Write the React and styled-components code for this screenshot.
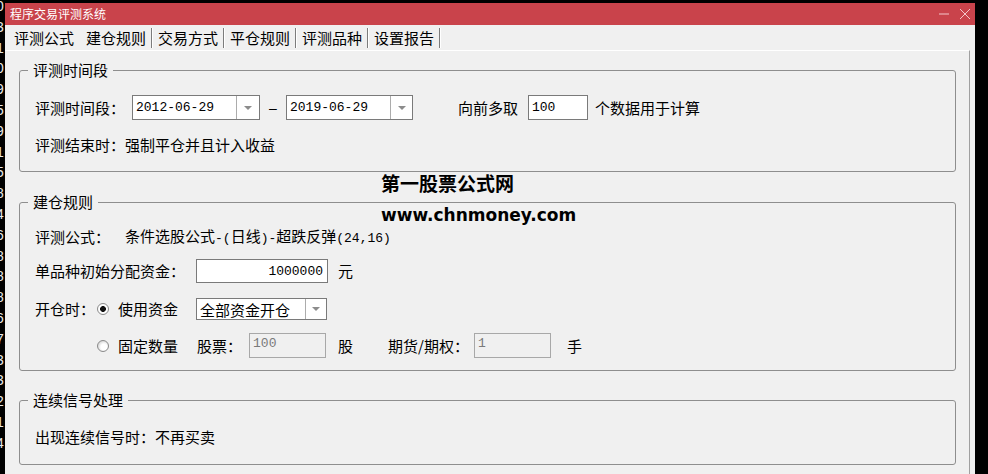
import React from 'react'
import styled, { createGlobalStyle } from 'styled-components'

const GlobalStyle = createGlobalStyle`
  html, body {
    margin: 0;
    padding: 0;
    background: #000;
  }
  body {
    font-family: "Noto Sans CJK SC", "Noto Sans", sans-serif;
    color: #000;
  }
`

const digits = ['0', '3', '1', '0', '9', '5', '9', '1', '5', '8', '4', '6', '8', '8', '8', '6', '7', '3', '3', '2', '1', '4']

export default function App() {
  return (
    <>
      <GlobalStyle />
      <Screen>
        <DigitStrip>
          <Digits>
            {digits.map((d, i) => <Digit key={i}>{d}</Digit>)}
          </Digits>
        </DigitStrip>
        <Window>
          <TitleBar>
            <TitleText>程序交易评测系统</TitleText>
            <WinButtons>
              <svg width="12" height="12" viewBox="0 0 12 12">
                <line x1="1" y1="6" x2="11" y2="6" stroke="#f3c7ca" strokeWidth="1" />
              </svg>
              <svg width="12" height="12" viewBox="0 0 12 12">
                <line x1="1" y1="1" x2="11" y2="11" stroke="#f3c7ca" strokeWidth="1" />
                <line x1="11" y1="1" x2="1" y2="11" stroke="#f3c7ca" strokeWidth="1" />
              </svg>
            </WinButtons>
          </TitleBar>

          <TabBar>
            <Tab>评测公式</Tab>
            <Tab sep>建仓规则</Tab>
            <Tab sep>交易方式</Tab>
            <Tab sep>平仓规则</Tab>
            <Tab sep>评测品种</Tab>
            <Tab sep>设置报告</Tab>
          </TabBar>

          <Panel>
            <Group>
              <Legend>评测时间段</Legend>
              <GroupBody pb={16}>
                <Row h={25} mt={17}>
                  <Label w={97}>评测时间段：</Label>
                  <Combo w={128}>
                    <ComboText mono>2012-06-29</ComboText>
                    <ComboButton w={22}><Arrow /></ComboButton>
                  </Combo>
                  <Dash>–</Dash>
                  <Combo w={127}>
                    <ComboText mono>2019-06-29</ComboText>
                    <ComboButton w={21}><Arrow /></ComboButton>
                  </Combo>
                  <Label ml={45}>向前多取</Label>
                  <TextBox w={60} ml={10}>100</TextBox>
                  <Label ml={7}>个数据用于计算</Label>
                </Row>
                <Row h={20} mt={15}>
                  <Label>评测结束时：强制平仓并且计入收益</Label>
                </Row>
              </GroupBody>
            </Group>

            <Group mt={22}>
              <Legend>建仓规则</Legend>
              <GroupBody pb={12}>
                <Row h={20} mt={17}>
                  <Label w={90}>评测公式：</Label>
                  <Label>
                    条件选股公式<Mono>-(</Mono>日线<Mono>)-</Mono>超跌反弹<Mono>(24,16)</Mono>
                  </Label>
                </Row>
                <Row h={24} mt={12}>
                  <Label w={161}>单品种初始分配资金：</Label>
                  <TextBox w={132} right>1000000</TextBox>
                  <Label ml={10}>元</Label>
                </Row>
                <Row h={22} mt={15}>
                  <Label w={62}>开仓时：</Label>
                  <Radio checked />
                  <Label ml={9}>使用资金</Label>
                  <Combo w={131} ml={18}>
                    <ComboText>全部资金开仓</ComboText>
                    <ComboButton w={20}><Arrow /></ComboButton>
                  </Combo>
                </Row>
                <Row h={25} mt={13}>
                  <Radio ml={62} />
                  <Label ml={9}>固定数量</Label>
                  <Label ml={19}>股票：</Label>
                  <TextBox w={77} ml={7} disabled>100</TextBox>
                  <Label ml={12}>股</Label>
                  <Label ml={35}>期货/期权：</Label>
                  <TextBox w={77} ml={5} disabled>1</TextBox>
                  <Label ml={16}>手</Label>
                </Row>
              </GroupBody>
            </Group>

            <Group mt={21}>
              <Legend>连续信号处理</Legend>
              <GroupBody pb={17}>
                <Row h={20} mt={19}>
                  <Label>出现连续信号时：不再买卖</Label>
                </Row>
              </GroupBody>
            </Group>
          </Panel>

          <Watermark>
            <WatermarkLine>第一股票公式网</WatermarkLine>
            <WatermarkLine latin>www.chnmoney.com</WatermarkLine>
          </Watermark>
        </Window>
      </Screen>
    </>
  )
}

const Screen = styled.div`
  width: 988px;
  height: 474px;
  overflow: hidden;
  background: #000;
  display: flex;
  align-items: flex-start;
`

const DigitStrip = styled.div`
  width: 5px;
  height: 474px;
  overflow: hidden;
  flex-shrink: 0;
`

const Digits = styled.div`
  margin-left: -4px;
  margin-top: -4px;
  color: #e8e8e8;
  font-family: "Liberation Sans", sans-serif;
  font-size: 14px;
`

const Digit = styled.div`
  height: 20.8px;
  line-height: 20.8px;
`

const Window = styled.div`
  position: relative;
  width: 970px;
  height: 471px;
  margin-top: 3px;
  background: #f0f0f0;
  display: flex;
  flex-direction: column;
  flex-shrink: 0;
`

const TitleBar = styled.div`
  height: 22px;
  background: #c9434b;
  display: flex;
  align-items: center;
  justify-content: space-between;
  padding: 0 4px 0 5px;
`

const TitleText = styled.span`
  color: #fff;
  font-size: 12px;
  line-height: 22px;
`

const WinButtons = styled.div`
  display: flex;
  align-items: center;
  gap: 9px;
  svg {
    display: block;
  }
`

const TabBar = styled.div`
  height: 25px;
  display: flex;
  align-items: flex-end;
  padding: 0 0 2px 3px;
  box-sizing: border-box;
`

const Tab = styled.div`
  font-size: 15px;
  line-height: 20px;
  height: 20px;
  padding: 0 5px 0 6px;
  border-right: 1px solid ${(p) => (p.sep ? '#7c7c7c' : 'transparent')};
  box-shadow: ${(p) => (p.sep ? '1px 0 0 #ffffff' : 'none')};
  white-space: nowrap;
`

const Panel = styled.div`
  flex: 1;
  margin-right: 5px;
  border-top: 1px solid #ffffff;
  border-right: 1px solid #a0a0a0;
  padding: 11px 13px 0 14px;
  display: flex;
  flex-direction: column;
`

const Group = styled.fieldset`
  margin: ${(p) => p.mt || 0}px 0 0 0;
  padding: 0;
  min-width: 0;
  border: 1px solid #8e8e8e;
  border-radius: 3px;
`

const Legend = styled.legend`
  font-size: 15px;
  line-height: 16px;
  padding: 0 5px;
  margin-left: 8px;
`

const GroupBody = styled.div`
  padding: 0 0 ${(p) => p.pb}px 15px;
  display: flex;
  flex-direction: column;
`

const Row = styled.div`
  display: flex;
  align-items: center;
  height: ${(p) => p.h}px;
  margin-top: ${(p) => p.mt}px;
`

const Label = styled.span`
  font-size: 15px;
  line-height: 20px;
  white-space: nowrap;
  width: ${(p) => (p.w ? `${p.w}px` : 'auto')};
  margin-left: ${(p) => p.ml || 0}px;
  flex-shrink: 0;
`

const Mono = styled.span`
  font-family: "Liberation Mono", monospace;
  font-size: 13px;
`

const Dash = styled.span`
  width: 26px;
  text-align: center;
  font-family: "Liberation Sans", sans-serif;
  font-size: 14px;
`

const Combo = styled.div`
  width: ${(p) => p.w}px;
  height: 100%;
  margin-left: ${(p) => p.ml || 0}px;
  box-sizing: border-box;
  border: 1px solid #7a7a7a;
  background: #fff;
  display: flex;
  flex-shrink: 0;
`

const ComboText = styled.div`
  flex: 1;
  display: flex;
  align-items: center;
  padding-left: 3px;
  font-family: ${(p) => (p.mono ? '"Liberation Mono", monospace' : '"Noto Sans CJK SC", sans-serif')};
  font-size: ${(p) => (p.mono ? 13 : 15)}px;
  white-space: nowrap;
  overflow: hidden;
`

const ComboButton = styled.div`
  width: ${(p) => p.w}px;
  border-left: 1px solid #acacac;
  display: flex;
  align-items: center;
  justify-content: center;
`

const Arrow = styled.span`
  width: 0;
  height: 0;
  border-left: 4px solid transparent;
  border-right: 4px solid transparent;
  border-top: 4px solid #8c8c8c;
`

const TextBox = styled.div`
  width: ${(p) => p.w}px;
  height: 100%;
  margin-left: ${(p) => p.ml || 0}px;
  box-sizing: border-box;
  border: 1px solid ${(p) => (p.disabled ? '#a8a8a8' : '#7a7a7a')};
  background: ${(p) => (p.disabled ? '#f0f0f0' : '#ffffff')};
  color: ${(p) => (p.disabled ? '#7a7a7a' : '#000')};
  font-family: "Liberation Mono", monospace;
  font-size: 13px;
  display: flex;
  align-items: ${(p) => (p.disabled ? 'flex-start' : 'center')};
  justify-content: ${(p) => (p.right ? 'flex-end' : 'flex-start')};
  padding: ${(p) => (p.disabled ? '2px 3px 0' : '0 4px 0 3px')};
  flex-shrink: 0;
`

const Radio = styled.span`
  width: 12px;
  height: 12px;
  margin-left: ${(p) => p.ml || 0}px;
  box-sizing: border-box;
  border-radius: 50%;
  border: 1px solid #8a8a8a;
  background: ${(p) =>
    p.checked
      ? 'radial-gradient(circle, #111 0 2.6px, #fdfdfd 3.2px)'
      : 'radial-gradient(circle at 60% 60%, #ffffff 0 3px, #dcdcdc 6px)'};
  flex-shrink: 0;
`

const Watermark = styled.div`
  position: absolute;
  left: 376px;
  top: 164px;
  display: flex;
  flex-direction: column;
  pointer-events: none;
`

const WatermarkLine = styled.div`
  font-family: ${(p) => (p.latin ? '"DejaVu Sans", sans-serif' : '"Noto Sans CJK SC", sans-serif')};
  font-weight: 700;
  font-size: ${(p) => (p.latin ? 17 : 19)}px;
  line-height: 32px;
  color: #000;
  white-space: nowrap;
`
